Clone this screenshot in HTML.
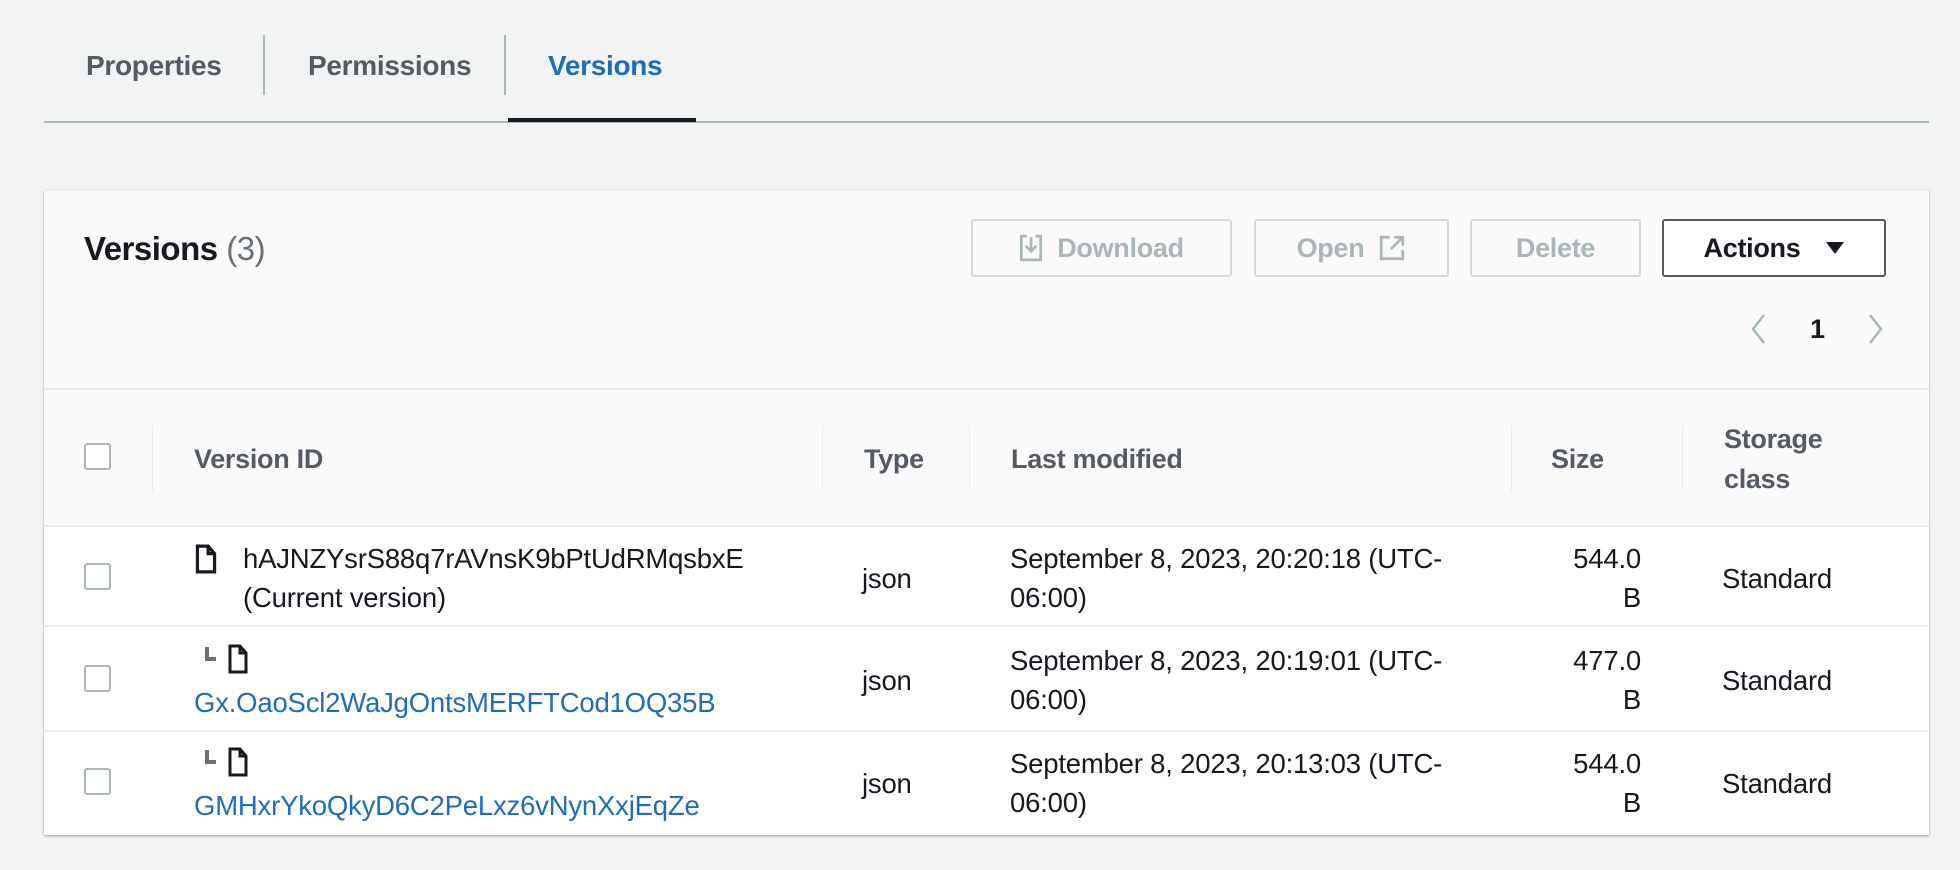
<!DOCTYPE html>
<html><head><meta charset="utf-8"><style>
*{margin:0;padding:0;box-sizing:border-box}
body{width:1960px;height:870px;background:#f2f3f3;font-family:"Liberation Sans",sans-serif;color:#16191f;position:relative;overflow:hidden}
.a{position:absolute;white-space:nowrap}
.tab{font-weight:bold;font-size:28px;color:#545b64;top:46px;line-height:40px;letter-spacing:-0.3px}
.vd{position:absolute;width:2px;background:#aab7b8}
.btn{position:absolute;border:2px solid #d5dbdb;border-radius:3px;background:#fafafa;color:#aab7b8;font-weight:bold;font-size:27px;display:flex;align-items:center;justify-content:center;gap:14px;letter-spacing:-0.3px}
.cb{position:absolute;width:27px;height:27px;border:2px solid #aab7b8;border-radius:3px;background:#fff;left:84px}
.th{font-weight:bold;font-size:27px;color:#545b64;line-height:40px;letter-spacing:-0.3px}
.td{font-size:27.5px;color:#16191f;line-height:39px;letter-spacing:-0.2px}
.hl{position:absolute;left:44px;width:1885px;height:2px;background:#eaeded}
.cd{position:absolute;width:1px;background:#eaeded;top:425px;height:66px}
.lnk{color:#1f6cbf}
</style></head><body>
<div class="a tab" style="left:86px">Properties</div>
<div class="vd" style="left:263px;top:35px;height:60px"></div>
<div class="a tab" style="left:308px">Permissions</div>
<div class="vd" style="left:504px;top:35px;height:60px"></div>
<div class="a tab" style="left:548px;color:#1f6cbf">Versions</div>
<div style="position:absolute;left:44px;top:121px;width:1885px;height:2px;background:#aab7b8"></div>
<div style="position:absolute;left:508px;top:118px;width:188px;height:4px;background:#16191f"></div>

<div style="position:absolute;left:44px;top:190px;width:1885px;height:645px;background:#fff;box-shadow:0 1px 2px rgba(0,28,36,.4);border-top:1px solid #eaeded"></div>
<div style="position:absolute;left:44px;top:191px;width:1885px;height:335px;background:#fafafa"></div>
<div class="a" style="left:84px;top:228px;font-size:33px;line-height:42px;font-weight:bold;letter-spacing:-0.5px">Versions <span style="font-weight:normal;color:#687078">(3)</span></div>

<div class="btn" style="left:971px;top:219px;width:261px;height:58px">
<svg width="24" height="28" viewBox="0 0 22 26"><path d="M7 2H2v22h18V2h-5" fill="none" stroke="#aab7b8" stroke-width="2.5"/><path d="M11 3v13M6 11l5 5 5-5" fill="none" stroke="#aab7b8" stroke-width="2.5"/></svg>Download</div>
<div class="btn" style="left:1254px;top:219px;width:195px;height:58px">Open
<svg width="28" height="28" viewBox="0 0 26 26"><path d="M11 3H3v20h20v-8" fill="none" stroke="#aab7b8" stroke-width="2.5"/><path d="M15 3h8v8M23 3L12 14" fill="none" stroke="#aab7b8" stroke-width="2.5"/></svg></div>
<div class="btn" style="left:1470px;top:219px;width:171px;height:58px">Delete</div>
<div class="btn" style="left:1662px;top:219px;width:224px;height:58px;border-color:#545b64;color:#16191f;background:#fff;gap:26px">Actions
<svg width="18" height="14" viewBox="0 0 18 14"><path d="M0 1h18L9 13z" fill="#16191f"/></svg></div>

<svg class="a" style="left:1748px;top:313px" width="20" height="32" viewBox="0 0 20 32"><path d="M16 2L5 16l11 14" fill="none" stroke="#aab7b8" stroke-width="2.5"/></svg>
<div class="a" style="left:1810px;top:313px;font-size:27px;line-height:32px;font-weight:bold">1</div>
<svg class="a" style="left:1866px;top:313px" width="20" height="32" viewBox="0 0 20 32"><path d="M4 2l11 14L4 30" fill="none" stroke="#aab7b8" stroke-width="2.5"/></svg>

<div class="hl" style="top:388px"></div>
<div class="hl" style="top:525px"></div>
<div class="hl" style="top:625px"></div>
<div class="hl" style="top:730px"></div>
<div class="cd" style="left:152px"></div>
<div class="cd" style="left:822px"></div>
<div class="cd" style="left:969px"></div>
<div class="cd" style="left:1511px"></div>
<div class="cd" style="left:1682px"></div>

<div class="cb" style="top:443px"></div>
<div class="a th" style="left:194px;top:439px">Version ID</div>
<div class="a th" style="left:864px;top:439px">Type</div>
<div class="a th" style="left:1011px;top:439px">Last modified</div>
<div class="a th" style="left:1551px;top:439px">Size</div>
<div class="a th" style="left:1724px;top:419px">Storage<br>class</div>

<!-- row1 -->
<div class="cb" style="top:563px"></div>
<svg class="a" style="left:195px;top:544px" width="22" height="30" viewBox="0 0 20 28"><path d="M2 2h10l6 7v17H2z M12 2v7h6" fill="none" stroke="#16191f" stroke-width="3"/></svg>
<div class="a td" style="left:243px;top:539px">hAJNZYsrS88q7rAVnsK9bPtUdRMqsbxE<br>(Current version)</div>
<div class="a td" style="left:862px;top:559px">json</div>
<div class="a td" style="left:1010px;top:539px">September 8, 2023, 20:20:18 (UTC-<br>06:00)</div>
<div class="a td" style="left:1520px;width:121px;text-align:right;top:539px">544.0<br>B</div>
<div class="a td" style="left:1722px;top:559px">Standard</div>

<!-- row2 -->
<div class="cb" style="top:665px"></div>
<svg class="a" style="left:204px;top:644px" width="52" height="30" viewBox="0 0 52 30"><path d="M3 3v12h9" fill="none" stroke="#687078" stroke-width="4"/><path d="M26 2h10l6 7v19H26z M36 2v7h6" fill="none" stroke="#16191f" stroke-width="3"/></svg>
<div class="a td lnk" style="left:194px;top:683px">Gx.OaoScl2WaJgOntsMERFTCod1OQ35B</div>
<div class="a td" style="left:862px;top:661px">json</div>
<div class="a td" style="left:1010px;top:641px">September 8, 2023, 20:19:01 (UTC-<br>06:00)</div>
<div class="a td" style="left:1520px;width:121px;text-align:right;top:641px">477.0<br>B</div>
<div class="a td" style="left:1722px;top:661px">Standard</div>

<!-- row3 -->
<div class="cb" style="top:768px"></div>
<svg class="a" style="left:204px;top:747px" width="52" height="30" viewBox="0 0 52 30"><path d="M3 3v12h9" fill="none" stroke="#687078" stroke-width="4"/><path d="M26 2h10l6 7v19H26z M36 2v7h6" fill="none" stroke="#16191f" stroke-width="3"/></svg>
<div class="a td lnk" style="left:194px;top:786px">GMHxrYkoQkyD6C2PeLxz6vNynXxjEqZe</div>
<div class="a td" style="left:862px;top:764px">json</div>
<div class="a td" style="left:1010px;top:744px">September 8, 2023, 20:13:03 (UTC-<br>06:00)</div>
<div class="a td" style="left:1520px;width:121px;text-align:right;top:744px">544.0<br>B</div>
<div class="a td" style="left:1722px;top:764px">Standard</div>
</body></html>
